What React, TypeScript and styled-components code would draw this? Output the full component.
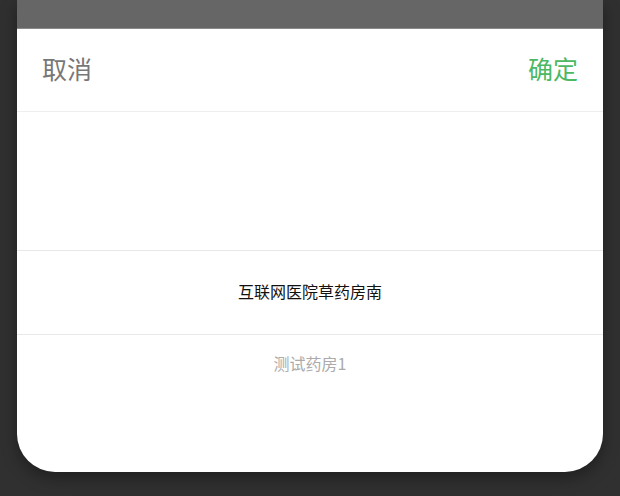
import React, { useState } from "react";
import styled, { createGlobalStyle } from "styled-components";

const options = ["互联网医院草药房南", "测试药房1"];

const App = () => {
  const [selected] = useState(0);

  return (
    <>
      <GlobalStyle />
      <StyledPage>
        <StyledScreen>
          <StyledMask />
          <StyledSheet>
            <StyledHeader>
              <StyledAction>取消</StyledAction>
              <StyledAction confirm>确定</StyledAction>
            </StyledHeader>
            <StyledWheel>
              <StyledSpacer />
              {options.map((name, i) => (
                <StyledOption key={name} active={i === selected}>
                  {name}
                </StyledOption>
              ))}
            </StyledWheel>
          </StyledSheet>
        </StyledScreen>
      </StyledPage>
    </>
  );
};

const GlobalStyle = createGlobalStyle`
  html, body {
    margin: 0;
    padding: 0;
    background: #303030;
    font-family: "Noto Sans CJK SC", "Noto Sans", sans-serif;
  }
`;

const StyledPage = styled.div`
  width: 620px;
  height: 496px;
  padding: 0 17px;
  box-sizing: border-box;
  background: #303030;
  overflow: hidden;
`;

const StyledScreen = styled.div`
  display: flex;
  flex-direction: column;
  height: 472px;
  border-radius: 0 0 38px 38px;
  box-shadow: 0 6px 16px rgba(0, 0, 0, 0.35);
  overflow: hidden;
`;

const StyledMask = styled.div`
  height: 29px;
  flex-shrink: 0;
  background: #666666;
  border-bottom: 1px solid #8a8a8a;
  box-sizing: border-box;
`;

const StyledSheet = styled.div`
  flex: 1;
  display: flex;
  flex-direction: column;
  background: #ffffff;
`;

const StyledHeader = styled.div`
  height: 83px;
  flex-shrink: 0;
  display: flex;
  justify-content: space-between;
  align-items: center;
  padding: 0 25px 3px;
  box-sizing: border-box;
  border-bottom: 1px solid #eeeeee;
`;

const StyledAction = styled.span<{ confirm?: boolean }>`
  font-size: 25px;
  line-height: 1;
  color: ${(p) => (p.confirm ? "#4cb863" : "#777777")};
`;

const StyledWheel = styled.div`
  display: flex;
  flex-direction: column;
`;

const StyledSpacer = styled.div`
  height: 138px;
`;

const StyledOption = styled.div<{ active?: boolean }>`
  height: ${(p) => (p.active ? "85px" : "60px")};
  display: flex;
  justify-content: center;
  align-items: center;
  padding-bottom: 4px;
  box-sizing: border-box;
  font-size: 16px;
  color: ${(p) => (p.active ? "#111111" : "#ababab")};
  border-top: ${(p) => (p.active ? "1px solid #e8e8e8" : "none")};
  border-bottom: ${(p) => (p.active ? "1px solid #e8e8e8" : "none")};
`;

export default App;
